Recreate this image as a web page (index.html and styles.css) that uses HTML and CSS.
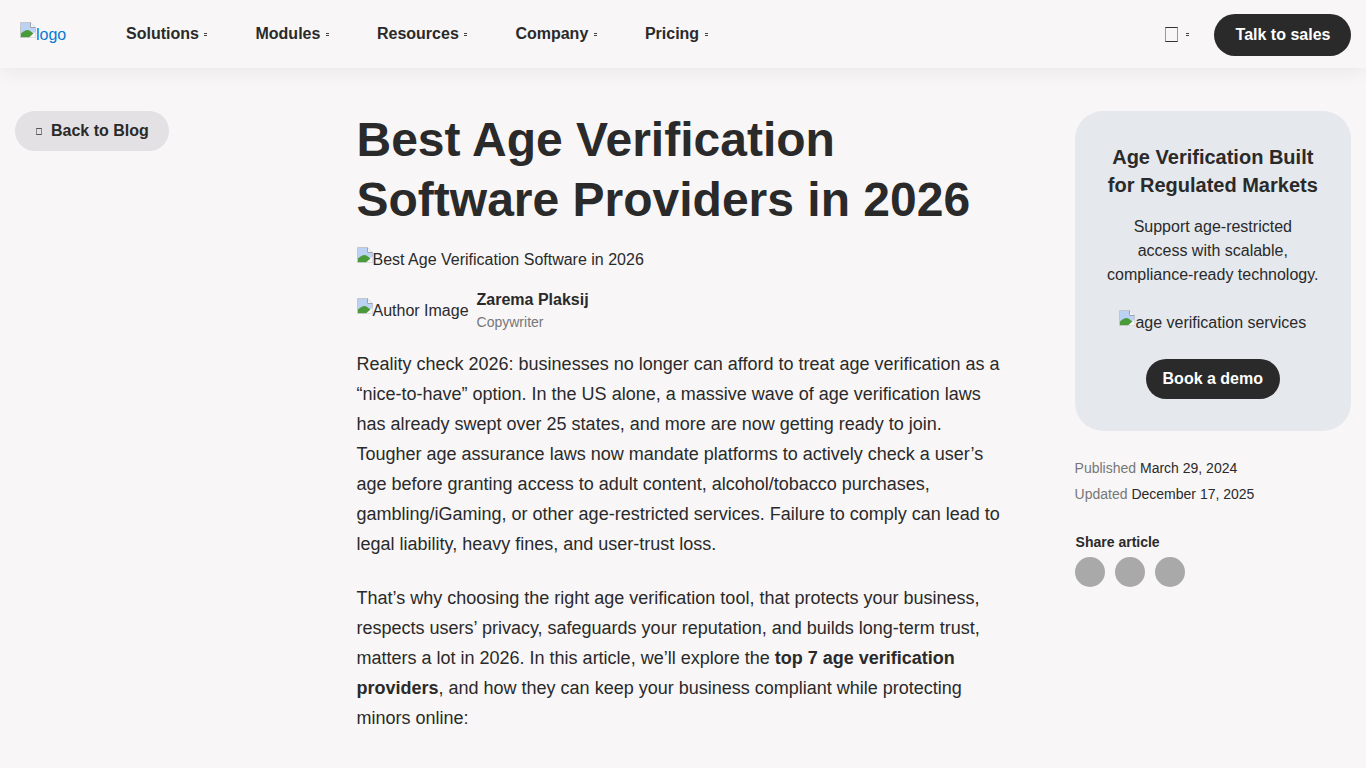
FILE: index.html
```html
<!DOCTYPE html>
<html lang="en">
<head>
<meta charset="utf-8">
<title>Best Age Verification Software Providers in 2026</title>
<link rel="stylesheet" href="styles.css">
</head>
<body>
<svg class="sprite" width="0" height="0" aria-hidden="true">
  <symbol id="broken" viewBox="0 0 16 16">
    <path d="M.5.5H10.5L15.5 5.5V15.5H.5Z" fill="#fff" stroke="#c3c6cb"/>
    <path d="M1 1H10V6H15V11L1 12Z" fill="#bcd2f5"/>
    <path d="M10.5 .5V5.5H15.5" fill="#f4f6fa" stroke="#9ea4ad"/>
    <path d="M1 15V11.5Q6 6.5 9.5 8.5L14 12V15Z" fill="#4a9a3a"/>
    <path d="M9 15.5L15.5 9.5V15.5Z" fill="#f8f6f7"/>
  </symbol>
</svg>
<header class="topbar">
  <a class="logo" href="#"><svg class="broken"><use href="#broken"/></svg>logo</a>
  <nav class="nav">
    <a class="nav-item" href="#">Solutions<i class="dot"></i></a>
    <a class="nav-item" href="#">Modules<i class="dot"></i></a>
    <a class="nav-item" href="#">Resources<i class="dot"></i></a>
    <a class="nav-item" href="#">Company<i class="dot"></i></a>
    <a class="nav-item" href="#">Pricing<i class="dot"></i></a>
  </nav>
  <div class="top-actions">
    <div class="lang"><i class="tofu"></i><i class="dot"></i></div>
    <a class="pill dark sales" href="#">Talk to sales</a>
  </div>
</header>
<main class="layout">
  <div class="left">
    <a class="back" href="#"><i class="tofu-small"></i>Back to Blog</a>
  </div>
  <article class="article">
    <h1>Best Age Verification Software Providers in 2026</h1>
    <div class="hero-alt"><svg class="broken"><use href="#broken"/></svg>Best Age Verification Software in 2026</div>
    <div class="author">
      <div class="author-alt"><svg class="broken"><use href="#broken"/></svg>Author Image</div>
      <div class="author-text">
        <div class="author-name">Zarema Plaksij</div>
        <div class="author-role">Copywriter</div>
      </div>
    </div>
    <p>Reality check 2026: businesses no longer can afford to treat age verification as a “nice-to-have” option. In the US alone, a massive wave of age verification laws has already swept over 25 states, and more are now getting ready to join. Tougher age assurance laws now mandate platforms to actively check a user’s age before granting access to adult content, alcohol/tobacco purchases, gambling/iGaming, or other age-restricted services. Failure to comply can lead to legal liability, heavy fines, and user-trust loss.</p>
    <p>That’s why choosing the right age verification tool, that protects your business, respects users’ privacy, safeguards your reputation, and builds long-term trust, matters a lot in 2026. In this article, we’ll explore the <strong>top 7 age verification providers</strong>, and how they can keep your business compliant while protecting minors online:</p>
  </article>
  <aside class="side">
    <div class="card">
      <h2>Age Verification Built for Regulated Markets</h2>
      <p>Support age-restricted access with scalable, compliance-ready technology.</p>
      <div class="card-alt"><svg class="broken"><use href="#broken"/></svg>age verification services</div>
      <a class="pill dark demo" href="#">Book a demo</a>
    </div>
    <div class="dates">
      <div><span class="muted">Published</span> March 29, 2024</div>
      <div><span class="muted">Updated</span> December 17, 2025</div>
    </div>
    <div class="share-title">Share article</div>
    <div class="share">
      <i class="circle"></i><i class="circle"></i><i class="circle"></i>
    </div>
  </aside>
</main>
</body>
</html>
```
FILE: styles.css
```css
* { box-sizing: border-box; }
html, body { margin: 0; height: 768px; overflow: hidden; }
body {
  background: #f8f6f7;
  color: #2a2a2a;
  font-family: "Liberation Sans", Arial, sans-serif;
}
.sprite { position: absolute; }
a { text-decoration: none; color: inherit; }
.broken { width: 16px; height: 16px; margin: -2px 0 2px; }

.topbar {
  height: 68px;
  display: flex;
  align-items: center;
  padding: 2px 15px 0 20px;
  box-shadow: 0 2px 20px rgba(0, 0, 0, 0.07);
}
.logo {
  width: 106px;
  margin-top: -2px;
  color: #0a7ad1;
  font-size: 16px;
  line-height: 21px;
}
.nav { display: flex; gap: 48px; }
.nav-item {
  display: flex;
  align-items: center;
  font-size: 16px;
  font-weight: 700;
  line-height: 24px;
  margin-top: -2px;
}
.dot {
  width: 3px;
  height: 3px;
  margin-left: 5.6px;
  border-top: 1px solid #444;
  border-bottom: 1px solid #444;
}
.top-actions { margin-left: auto; display: flex; align-items: center; margin-top: -2px; }
.lang { display: flex; align-items: center; margin-right: 25px; }
.tofu { width: 13px; height: 15px; border: 1px solid; border-color: #333 #999; }
.lang .dot { margin-left: 8px; }
.pill {
  display: flex;
  align-items: center;
  justify-content: center;
  font-weight: 700;
  font-size: 16px;
}
.dark { background: #2a2a2a; color: #fff; }
.sales { width: 137px; height: 42px; border-radius: 21px; margin-top: 2px; padding-left: 1px; }

.layout {
  display: grid;
  grid-template-columns: 341.5px 718.1px 276.4px;
  padding: 43px 15px 0;
  justify-content: start;
}
.article { padding-right: 63.6px; }
.back {
  display: inline-flex;
  align-items: center;
  height: 40px;
  padding: 0 20px 0 21px;
  border-radius: 20px;
  background: #e3e1e4;
  font-size: 16px;
  font-weight: 700;
}
.tofu-small {
  width: 6px;
  height: 7px;
  margin-right: 9px;
  border: 1px solid;
  border-color: #555 #888;
}

h1 {
  margin: -1px 0 0;
  width: 640px;
  font-size: 48px;
  line-height: 60px;
  font-weight: 700;
  color: #2a2a2a;
}
.hero-alt {
  margin-top: 18px;
  font-size: 16px;
  line-height: 24px;
}
.author {
  display: flex;
  align-items: center;
  gap: 8px;
  margin-top: 16px;
}
.author-alt { font-size: 16px; line-height: 24px; }
.author-name { font-size: 16px; font-weight: 700; line-height: 24px; }
.author-role { font-size: 14px; line-height: 21px; color: #777; }
.article p {
  margin: 0 0 24px;
  font-size: 18px;
  line-height: 30px;
  color: #2a2a2a;
}
.author + p { margin-top: 16px; }

.card {
  height: 320px;
  border-radius: 28px;
  background: #e5e8ed;
  padding: 32px 30px 0;
  text-align: center;
}
.card h2 {
  margin: 0;
  font-size: 20px;
  line-height: 28px;
  font-weight: 700;
}
.card p {
  width: 211.5px;
  margin: 16px auto 0;
  font-size: 16px;
  line-height: 24px;
}
.card-alt { margin-top: 24px; font-size: 16px; line-height: 24px; white-space: nowrap; }
.demo {
  width: 134px;
  height: 40px;
  margin: 24px auto 0;
  border-radius: 20px;
}
.dates { margin-top: 24px; font-size: 14px; line-height: 26px; }
.muted { color: #777; }
.share-title { margin-top: 25px; padding-left: 1px; font-size: 14px; font-weight: 700; line-height: 20px; }
.share { display: flex; gap: 10px; margin-top: 5px; }
.circle { width: 30px; height: 30px; border-radius: 50%; background: #a9a9a9; }
```
